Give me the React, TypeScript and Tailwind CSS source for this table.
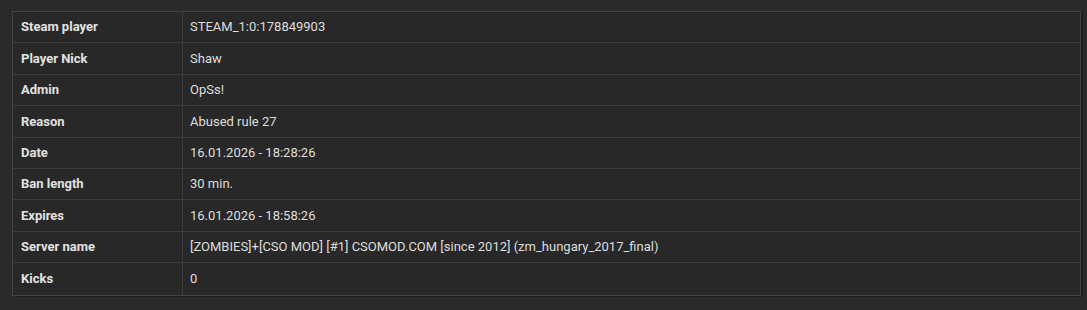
import React from "react";

const rows: [string, string][] = [
  ["Steam player", "STEAM_1:0:178849903"],
  ["Player Nick", "Shaw"],
  ["Admin", "OpSs!"],
  ["Reason", "Abused rule 27"],
  ["Date", "16.01.2026 - 18:28:26"],
  ["Ban length", "30 min."],
  ["Expires", "16.01.2026 - 18:58:26"],
  ["Server name", "[ZOMBIES]+[CSO MOD] [#1] CSOMOD.COM [since 2012] (zm_hungary_2017_final)"],
  ["Kicks", "0"],
];

export default function App() {
  return (
    <div
      className="w-[1087px] h-[310px] bg-[#2a2a2a] pt-[11px] pl-[12px]"
      style={{ fontFamily: "Roboto, 'Liberation Sans', sans-serif" }}
    >
      <div className="w-[1069px] border border-[#434343] bg-[#282828] shadow-[2px_1px_0_#1f1f1f]">
        {rows.map(([k, v], i) => (
          <div
            key={k}
            className={`flex h-[31.4px] items-center text-[13px] ${i < rows.length - 1 ? "border-b border-[#3d3d3d]" : ""}`}
          >
            <div className="w-[170px] h-full flex items-center pl-[8px] font-bold text-[#e2e2e2] border-r border-[#3d3d3d]">
              {k}
            </div>
            <div className="flex-1 pl-[7px] text-[#dedede]">{v}</div>
          </div>
        ))}
      </div>
    </div>
  );
}
